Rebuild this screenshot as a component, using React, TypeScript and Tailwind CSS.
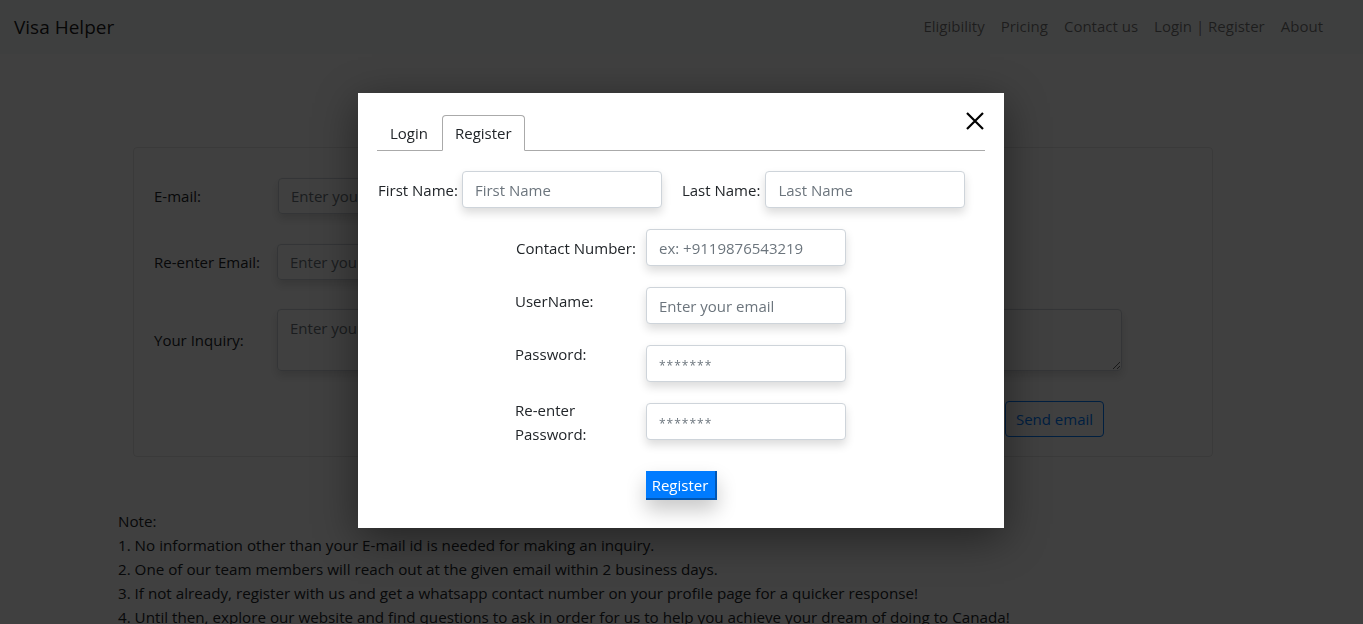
import clsx from "clsx";

const navLinks = ["Eligibility", "Pricing", "Contact us", "Login | Register", "About"];

const notes = [
  "Note:",
  "1. No information other than your E-mail id is needed for making an inquiry.",
  "2. One of our team members will reach out at the given email within 2 business days.",
  "3. If not already, register with us and get a whatsapp contact number on your profile page for a quicker response!",
  "4. Until then, explore our website and find questions to ask in order for us to help you achieve your dream of doing to Canada!",
];

const inputCls =
  "h-[37px] w-[200px] rounded-[4px] border border-[#ced4da] bg-white px-3 text-[15px] text-[#495057] placeholder:text-[#6c757d] shadow-[0_5px_10px_rgba(0,0,0,0.14)] outline-none";

function Field({
  label,
  placeholder,
  labelCls,
  small,
}: {
  label: React.ReactNode;
  placeholder: string;
  labelCls: string;
  small?: boolean;
}) {
  return (
    <div className="flex items-start">
      <div className={clsx("w-[131px] text-[15px] leading-6 text-[#212529]", labelCls)}>{label}</div>
      <input
        className={clsx(inputCls, small && "placeholder:text-[12px] placeholder:tracking-[1px]")}
        placeholder={placeholder}
      />
    </div>
  );
}

function RegisterModal() {
  return (
    <div className="fixed inset-0 z-50 pl-[358px] pt-[93px]">
      <div className="relative h-[435px] w-[646px] bg-white px-[19px] pt-[22px] shadow-[0_10px_40px_rgba(0,0,0,0.45)]">
        <button className="absolute right-[20px] top-[19px] h-[18px] w-[18px]" aria-label="Close">
          <svg viewBox="0 0 18 18" width="18" height="18">
            <path d="M1 1L17 17M17 1L1 17" stroke="#000" strokeWidth="2.2" />
          </svg>
        </button>

        <div className="flex h-[36px] border-b border-[#aaaaaa] text-[15px] text-[#212529]">
          <div className="flex items-center pl-[13px] pr-[14px]">Login</div>
          <div className="-mb-px flex items-center rounded-t-[4px] border border-b-white border-[#aaaaaa] bg-white px-[12px]">
            Register
          </div>
        </div>

        <div className="mt-[20px] flex items-center text-[15px] text-[#212529]">
          <span className="ml-[1px]">First Name:</span>
          <input className={clsx(inputCls, "ml-[4px]")} placeholder="First Name" />
          <span className="ml-[20px]">Last Name:</span>
          <input className={clsx(inputCls, "ml-[5px]")} placeholder="Last Name" />
        </div>

        <div className="ml-[139px] mt-[21px] flex flex-col gap-[21px]">
          <div className="flex items-center">
            <div className="w-[130px] text-[15px] leading-6 text-[#212529]">Contact Number:</div>
            <input className={inputCls} placeholder="ex: +9119876543219" />
          </div>
          <Field label="UserName:" placeholder="Enter your email" labelCls="mt-[2px] -ml-px" />
          <Field label="Password:" placeholder="*******" labelCls="-mt-[3px] -ml-px" small />
          <Field
            label={
              <>
                Re-enter
                <br />
                Password:
              </>
            }
            placeholder="*******"
            labelCls="-mt-[5px] -ml-px h-[37px]"
            small
          />
        </div>

        <div className="mt-[31px] flex justify-center">
          <button className="h-[29px] w-[71px] border-b-2 border-r-2 border-[#0056b3] bg-[#007bff] text-[15px] text-white shadow-[0_10px_20px_rgba(0,0,0,0.22)]">
            Register
          </button>
        </div>
      </div>
    </div>
  );
}

export default function App() {
  return (
    <div className="relative min-h-[624px] overflow-hidden bg-white font-['Open_Sans',sans-serif] text-[15px] leading-6 text-[#212529]">
      <nav className="flex h-[54px] items-center justify-between bg-[#f8f9fa] pl-[14px] pr-[32px]">
        <span className="text-[19px] text-black/90">Visa Helper</span>
        <ul className="flex pb-[2px]">
          {navLinks.map((l) => (
            <li key={l} className="px-[8px] text-black/55">
              {l}
            </li>
          ))}
        </ul>
      </nav>

      <div className="ml-[133px] mt-[93px] w-[1080px] rounded-[4px] border border-black/10 px-[20px] pb-[19px] pt-[30px]">
        <div className="flex items-center">
          <span className="w-[124px]">E-mail:</span>
          <input className="h-[36px] w-[420px] rounded-[4px] border border-[#ced4da] px-3 placeholder:text-[#6c757d] shadow-[0_5px_10px_rgba(0,0,0,0.14)]" placeholder="Enter your email" />
        </div>
        <div className="mt-[30px] flex items-center">
          <span className="w-[123px]">Re-enter Email:</span>
          <input className="h-[36px] w-[420px] rounded-[4px] border border-[#ced4da] px-3 placeholder:text-[#6c757d] shadow-[0_5px_10px_rgba(0,0,0,0.14)]" placeholder="Enter your email" />
        </div>
        <div className="mt-[29px] flex items-center">
          <span className="w-[123px]">Your Inquiry:</span>
          <textarea className="h-[62px] w-[845px] rounded-[4px] border border-[#ced4da] px-3 py-[6px] placeholder:text-[#6c757d] shadow-[0_5px_10px_rgba(0,0,0,0.14)]" placeholder="Enter your inquiry" />
        </div>
        <div className="mt-[30px] flex justify-end pr-[88px]">
          <button className="h-[36px] w-[99px] rounded-[4px] border border-[#007bff] text-[#007bff]">Send email</button>
        </div>
      </div>

      <div className="ml-[118px] mt-[52px] text-[15.2px]">
        {notes.map((n) => (
          <div key={n}>{n}</div>
        ))}
      </div>

      <div className="fixed inset-0 z-40 bg-black/75" />
      <RegisterModal />
    </div>
  );
}
